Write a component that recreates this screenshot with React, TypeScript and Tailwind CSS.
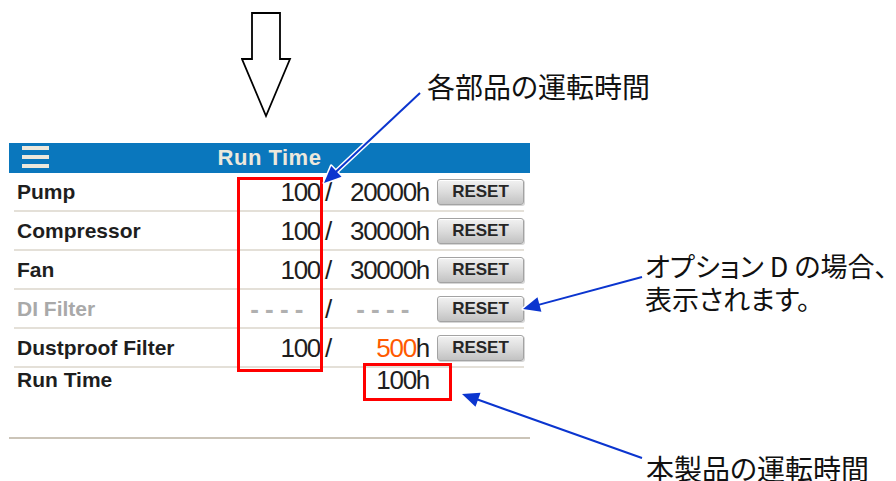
import type { ReactNode } from 'react'

interface RunRow {
  label: string
  used: string
  limit: ReactNode
  disabled?: boolean
}

const rows: RunRow[] = [
  { label: 'Pump', used: '100', limit: '20000h' },
  { label: 'Compressor', used: '100', limit: '30000h' },
  { label: 'Fan', used: '100', limit: '30000h' },
  { label: 'DI Filter', used: '- - - -', limit: '- - - -', disabled: true },
  {
    label: 'Dustproof Filter',
    used: '100',
    limit: (
      <>
        <span className="text-[#ff5a00]">500</span>h
      </>
    )
  }
]

function ResetButton() {
  return (
    <button className="ml-[8px] flex h-[26px] w-[87px] shrink-0 items-center justify-center rounded-[3px] border border-[#a3a3a3] bg-linear-to-b from-[#f2f2f2] via-[#dcdcdc] to-[#c2c2c2] text-[17px] leading-none font-bold text-[#262626] shadow-[inset_0_1px_0_#fff,1px_1px_0_#d6d6d6]">
      RESET
    </button>
  )
}

function Row({ row }: { row: RunRow }) {
  const labelColor = row.disabled ? 'text-[#a9a9a9]' : 'text-[#1e1e1e]'
  const numCls = row.disabled ? 'font-bold text-[#b0b0b0] tracking-[-0.5px]' : 'text-[#1e1e1e] tracking-[-1.3px]'
  return (
    <div className="ml-[5px] mr-[6px] flex h-[39px] items-center border-b-2 border-[#e4e0d8]">
      <div className={`flex-1 pl-[3px] text-[21px] leading-none font-bold ${labelColor}`}>{row.label}</div>
      <div className={`flex w-[62px] justify-end whitespace-nowrap text-[26px] leading-none ${row.disabled ? 'pr-[17px]' : ''}`}>
        <span className={numCls}>{row.used}</span>
      </div>
      <div className="w-[20px] pl-[5px] text-[26px] leading-none text-[#1e1e1e]">/</div>
      <div className={`flex w-[89px] justify-end whitespace-nowrap text-[26px] leading-none ${row.disabled ? 'pr-[20px]' : ''}`}>
        <span className={numCls}>{row.limit}</span>
      </div>
      <ResetButton />
    </div>
  )
}

function BlueArrow({ x1, y1, x2, y2 }: { x1: number; y1: number; x2: number; y2: number }) {
  const dx = x2 - x1
  const dy = y2 - y1
  const len = Math.hypot(dx, dy)
  const ux = dx / len
  const uy = dy / len
  const hl = 17
  const hw = 7.5
  const bx = x2 - ux * hl
  const by = y2 - uy * hl
  const pts = `${x2},${y2} ${bx - uy * hw},${by + ux * hw} ${bx + uy * hw},${by - ux * hw}`
  return (
    <g>
      <line x1={x1} y1={y1} x2={bx + ux * 2} y2={by + uy * 2} stroke="#fff" strokeWidth={5} />
      <polygon points={pts} fill="#fff" stroke="#fff" strokeWidth={3} strokeLinejoin="round" />
      <line x1={x1} y1={y1} x2={bx + ux * 2} y2={by + uy * 2} stroke="#0b35cf" strokeWidth={2} />
      <polygon points={pts} fill="#0b35cf" />
    </g>
  )
}

export default function App() {
  return (
    <div className="relative h-[481px] w-[896px] overflow-hidden bg-white font-['Liberation_Sans',Arial,sans-serif]">
      <div className="flex flex-col pl-[9px]">
        {/* Down arrow above the screen */}
        <div className="h-[143px]">
          <svg width="52" height="110" viewBox="0 0 52 110" className="ml-[232px] mt-[11px]">
            <polygon
              points="11,2 39,2 39,48 49,48 25,105 1,48 11,48"
              fill="#fff"
              stroke="#000"
              strokeWidth={1.8}
              strokeLinejoin="miter"
            />
          </svg>
        </div>

        {/* Run Time screen */}
        <div className="w-[521px]">
          <div className="relative flex h-[30px] items-center justify-center bg-[#0a77bd]">
            <div className="absolute left-[13px] top-[3px] flex flex-col gap-[5px]">
              <span className="block h-[4px] w-[27px] bg-[#ece8dc]" />
              <span className="block h-[4px] w-[27px] bg-[#ece8dc]" />
              <span className="block h-[4px] w-[27px] bg-[#ece8dc]" />
            </div>
            <span className="text-[22px] leading-none font-bold tracking-[0.5px] text-[#ece8dc]">Run Time</span>
          </div>

          {rows.map((r) => (
            <Row key={r.label} row={r} />
          ))}

          <div className="ml-[5px] mr-[6px] flex h-[23px] items-center">
            <div className="flex-1 pl-[3px] text-[21px] leading-none font-bold text-[#1e1e1e]">Run Time</div>
            <div className="w-[89px] text-right text-[26px] leading-none tracking-[-1.3px] text-[#1e1e1e]">100h</div>
            <div className="w-[95px]" />
          </div>
          <div className="h-[48px] border-b-2 border-[#cbc4b8]" />
        </div>
      </div>

      {/* Red highlight frames */}
      <div className="absolute left-[237px] top-[177px] h-[195px] w-[86px] border-[3px] border-[#ff0000]" />
      <div className="absolute left-[363px] top-[363px] h-[38px] w-[89px] border-[3px] border-[#ff0000]" />

      {/* Callout arrows */}
      <svg className="pointer-events-none absolute left-0 top-0" width="896" height="481" viewBox="0 0 896 481">
        <BlueArrow x1={420} y1={93} x2={324} y2={183} />
        <BlueArrow x1={642} y1={277} x2={523} y2={309} />
        <BlueArrow x1={642} y1={458} x2={462} y2={394} />
      </svg>

      {/* Callout texts */}
      <div className="absolute left-[427px] top-[72px] whitespace-nowrap font-['Noto_Sans_CJK_JP',sans-serif] text-[28px] leading-none text-[#111] [font-feature-settings:'palt']">
        各部品の運転時間
      </div>
      <div className="absolute left-[645px] top-[249px] whitespace-nowrap font-['Noto_Sans_CJK_JP',sans-serif] text-[27px] leading-[33px] text-[#111] [font-feature-settings:'palt']">
        <div>オプション D の場合、</div>
        <div>表示されます。</div>
      </div>
      <div className="absolute left-[646px] top-[454px] whitespace-nowrap font-['Noto_Sans_CJK_JP',sans-serif] text-[28px] leading-none text-[#111] [font-feature-settings:'palt']">
        本製品の運転時間
      </div>
    </div>
  )
}
